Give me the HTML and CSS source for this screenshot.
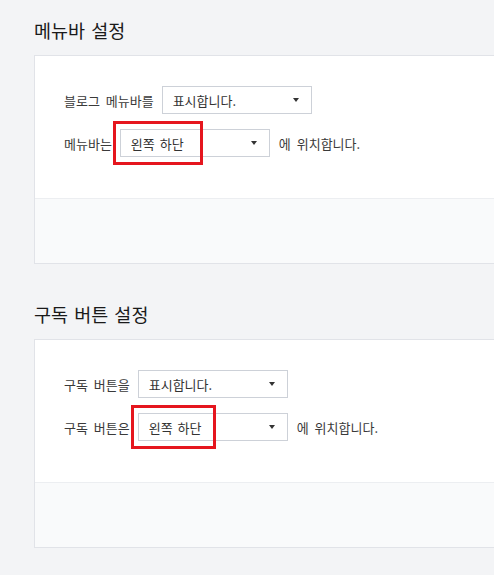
FILE: index.html
```html
<!DOCTYPE html>
<html>
<head>
  <meta charset="utf-8">
  <title>블로그 설정</title>
  <link rel="stylesheet" href="styles.css">
</head>
<body>
  <div class="page">
    <section class="section">
      <h2 class="section-title">메뉴바 설정</h2>
      <div class="card">
        <div class="card-body">
          <div class="row">
            <span class="label">블로그 메뉴바를</span>
            <div class="select"><span>표시합니다.</span><i class="caret"></i></div>
          </div>
          <div class="row">
            <span class="label">메뉴바는</span>
            <div class="select-wrap">
              <div class="select"><span>왼쪽 하단</span><i class="caret"></i></div>
              <div class="mark mark-menu"></div>
            </div>
            <span class="label">에 위치합니다.</span>
          </div>
        </div>
        <div class="card-foot"></div>
      </div>
    </section>

    <section class="section">
      <h2 class="section-title">구독 버튼 설정</h2>
      <div class="card">
        <div class="card-body">
          <div class="row">
            <span class="label">구독 버튼을</span>
            <div class="select"><span>표시합니다.</span><i class="caret"></i></div>
          </div>
          <div class="row">
            <span class="label">구독 버튼은</span>
            <div class="select-wrap">
              <div class="select"><span>왼쪽 하단</span><i class="caret"></i></div>
              <div class="mark mark-sub"></div>
            </div>
            <span class="label">에 위치합니다.</span>
          </div>
        </div>
        <div class="card-foot"></div>
      </div>
    </section>
  </div>
</body>
</html>
```

FILE: styles.css
```css
* { margin: 0; padding: 0; box-sizing: border-box; }
html, body { overflow: hidden; }
body {
  font-family: "Noto Sans CJK KR", "Noto Sans", sans-serif;
  background-color: #f3f4f6;
  color: #333;
}

.page {
  padding: 18px 0 0 34px;
}

.section + .section {
  margin-top: 38px;
}

.section-title {
  font-size: 18.5px;
  font-weight: normal;
  line-height: 24px;
  word-spacing: 2px;
  color: #1a1a1a;
  margin-bottom: 13px;
}

.card {
  margin-right: -20px;
  background-color: #fff;
  border: 1px solid #e1e3e8;
}

.card-body {
  padding: 30px 29px 41px;
  display: flex;
  flex-direction: column;
  gap: 15px;
}

.row {
  display: flex;
  align-items: center;
  gap: 8px;
  font-size: 13px;
}

.label {
  color: #3a3a3a;
  word-spacing: 3px;
}

.row .select-wrap + .label {
  margin-left: 1px;
}

.select-wrap {
  position: relative;
}

.select {
  width: 150px;
  height: 28px;
  border: 1px solid #cdd1d8;
  background-color: #fff;
  display: flex;
  align-items: center;
  justify-content: space-between;
  padding: 0 12px 0 10px;
  color: #333;
  word-spacing: 2px;
}

.caret {
  width: 0;
  height: 0;
  border-left: 3.5px solid transparent;
  border-right: 3.5px solid transparent;
  border-top: 4px solid #333;
}

.card-foot {
  height: 65px;
  background-color: #f9fafb;
  border-top: 1px solid #eceef1;
}

/* red annotation boxes */
.mark {
  position: absolute;
  left: -7px;
  top: -8px;
  border: 3px solid #e5161e;
  pointer-events: none;
}
.mark-menu {
  width: 90px;
  height: 44px;
}
.mark-sub {
  width: 85px;
  height: 44px;
}
```
